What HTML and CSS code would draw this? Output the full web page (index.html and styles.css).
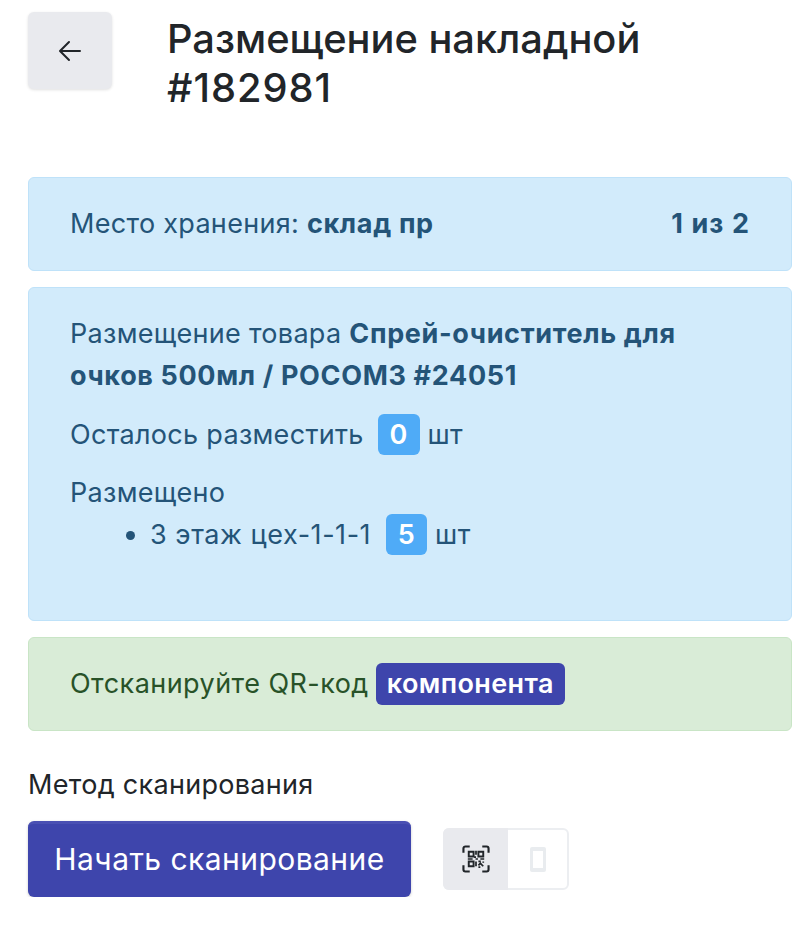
FILE: index.html
```html
<!DOCTYPE html>
<html lang="ru">
<head>
<meta charset="utf-8">
<title>Размещение накладной</title>
<link rel="stylesheet" href="styles.css">
</head>
<body>
<main class="page">
  <header class="head">
    <button class="back" type="button" aria-label="Назад">
      <svg width="24" height="24" viewBox="0 0 24 24" fill="none" stroke="currentColor" stroke-width="2" stroke-linecap="round" stroke-linejoin="round"><path d="M22 12H2.500M11 3l-9 9 9 9"/></svg>
    </button>
    <h1 class="title">Размещение накладной <span class="docnum">#182981</span></h1>
  </header>

  <section class="alert info storage">
    <span>Место хранения: <b>склад пр</b></span>
    <b class="count">1 из 2</b>
  </section>

  <section class="alert info detail">
    <p class="lead">Размещение товара <b>Спрей-очиститель для очков 500мл / РОСОМЗ #24051</b></p>
    <p class="left">Осталось разместить <span class="badge sky">0</span> шт</p>
    <p class="placed">Размещено</p>
    <ul class="list">
      <li>3 этаж цех-1-1-1 <span class="badge sky five">5</span> шт</li>
    </ul>
  </section>

  <section class="alert success">
    Отсканируйте QR-код <span class="badge indigo">компонента</span>
  </section>

  <div class="method">Метод сканирования</div>
  <div class="actions">
    <button class="start" type="button">Начать сканирование</button>
    <div class="toggle">
      <span class="opt active">
        <svg width="28" height="28" viewBox="0 0 29 29" fill="none" stroke="#212529">
          <path stroke-width="2.200" d="M1.500 8V3.500a2 2 0 0 1 2-2H8M21 1.500h4.500a2 2 0 0 1 2 2V8M27.500 21v4.500a2 2 0 0 1-2 2H21M8 27.500H3.500a2 2 0 0 1-2-2V21"/>
          <path stroke-width="2" d="M7 7h5v5H7zM17 7h5v5h-5zM7 17h5v5H7z"/>
          <path stroke-width="1.800" d="M14.500 6v4M14.500 12.500h-2M6 14.500h5M14 14.500h2.500M19 14.500h4M17 17h2.500M14.500 17v5M17 21l2-2 3 3M22 17v1.500M17 23h2"/>
        </svg>
      </span>
      <span class="opt">
        <svg width="16" height="25" viewBox="0 0 16 25"><path fill="#e9ecef" fill-rule="evenodd" d="M2 0h12a2 2 0 0 1 2 2v21a2 2 0 0 1-2 2H2a2 2 0 0 1-2-2V2a2 2 0 0 1 2-2zm1 4v17h10V4z"/></svg>
      </span>
    </div>
  </div>
</main>
</body>
</html>
```

FILE: styles.css
```css
* { box-sizing: border-box; }
html, body { margin: 0; padding: 0; background: #fff; }
body {
  font-family: Inter, "Noto Sans", sans-serif;
  font-size: 27px;
  letter-spacing: .3px;
  line-height: 41px;
  color: #212529;
}
.page { width: 806px; padding: 12px 14px 0 28px; }
.head { display: flex; align-items: flex-start; gap: 55px; height: 165px; }
.back {
  flex: none; width: 84px; height: 77px; padding: 0; border: 0; border-radius: 6px;
  background: #e9eaee; color: #212529;
  box-shadow: 0 1px 3px rgba(0,0,0,.12);
  display: flex; align-items: center; justify-content: center;
}
.title {
  margin: 0; width: 560px; font-size: 39.8px; letter-spacing: 0; line-height: 49px;
  font-weight: 500; padding-top: 2px;
}
.docnum { letter-spacing: 1px; }
.alert { border: 1.6px solid; border-radius: 6px; margin-bottom: 16px; width: 764px; }
.info { background: #d2ebfb; border-color: #bfe2f9; color: #245478; }
.success { background: #d9ecd7; border-color: #c9e5c6; color: #285228; height: 94px; padding: 25px 41px; letter-spacing: .45px; }
.storage { height: 94px; padding: 25px 41px; display: flex; justify-content: space-between; }
.detail { height: 334px; padding: 25px 41px; }
b { font-weight: 700; letter-spacing: .65px; }
.count { letter-spacing: 1.1px; }
p { margin: 0; }
.lead { margin-bottom: 17px; line-height: 42px; }
.left { margin-bottom: 17px; }
.list { margin: 0; padding: 0 0 0 80px; }
.list li { margin-top: 1px; letter-spacing: .55px; }
.badge {
  display: inline-block; color: #fff; font-weight: 600; border-radius: 6px;
  line-height: 41px; height: 41px; vertical-align: baseline;
}
.sky { background: #4fabf7; padding: 0 12px; margin: 0 0 0 6px; }
.five { padding: 0 11.5px; margin-left: 7px; }
.indigo { background: #3e45ac; padding: 0 11px; margin-left: -1px; line-height: 42px; height: 42px; letter-spacing: .4px; }
.method { margin-top: 33px; line-height: 41px; }
.actions { display: flex; align-items: center; gap: 32px; margin-top: 16px; }
.start {
  width: 383px; height: 76px; padding: 0 0 3px; border: 0; border-top: 3px solid #4a50b3; border-radius: 6px;
  background: #3e45ac; color: #fff; font: 420 30px Inter, sans-serif; letter-spacing: .45px;
  box-shadow: 0 1px 3px rgba(0,0,0,.2);
}
.toggle {
  display: flex; height: 62px; width: 126px; border: 2px solid #eceef1; border-radius: 6px;
}
.opt { flex: 1; display: flex; align-items: center; justify-content: center; }
.active { background: #e9eaee; margin: -2px 0 -2px -2px; border-radius: 6px 0 0 6px; flex: none; width: 65px; }
```
